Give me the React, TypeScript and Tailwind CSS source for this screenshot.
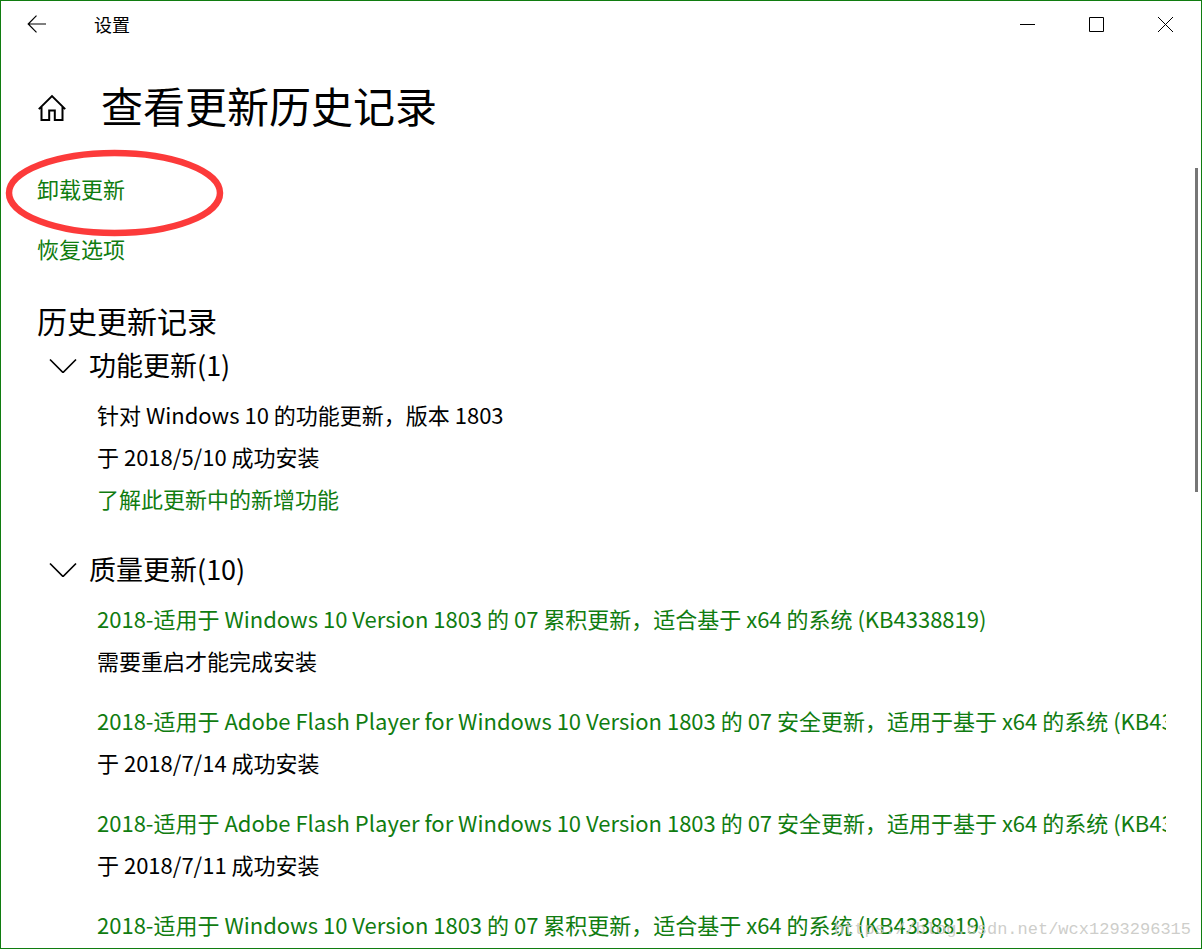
import type { ReactNode } from "react"

interface Update {
  id: number
  title: string
  status?: string
}

const featureUpdate = {
  title: "针对 Windows 10 的功能更新，版本 1803",
  status: "于 2018/5/10 成功安装",
  link: "了解此更新中的新增功能"
}

const qualityUpdates: Update[] = [
  {
    id: 1,
    title: "2018-适用于 Windows 10 Version 1803 的 07 累积更新，适合基于 x64 的系统 (KB4338819)",
    status: "需要重启才能完成安装"
  },
  {
    id: 2,
    title: "2018-适用于 Adobe Flash Player for Windows 10 Version 1803 的 07 安全更新，适用于基于 x64 的系统 (KB43",
    status: "于 2018/7/14 成功安装"
  },
  {
    id: 3,
    title: "2018-适用于 Adobe Flash Player for Windows 10 Version 1803 的 07 安全更新，适用于基于 x64 的系统 (KB43",
    status: "于 2018/7/11 成功安装"
  },
  {
    id: 4,
    title: "2018-适用于 Windows 10 Version 1803 的 07 累积更新，适合基于 x64 的系统 (KB4338819)"
  }
]

const TitleBar = () => (
  <div className="flex h-[47px] shrink-0 items-center pr-px">
    <button aria-label="返回" className="flex h-full w-[72px] items-center justify-center">
      <svg width="20" height="20" viewBox="0 0 20 20" fill="none" stroke="#000" strokeWidth="1.2">
        <path d="M19 9H1M9.5 0.7L1.2 9l8.3 8.3" />
      </svg>
    </button>
    <div className="ml-[21px] flex-1 pb-0.5 text-lg">设置</div>
    <button aria-label="最小化" className="flex h-full w-[69px] items-center justify-center">
      <svg width="15" height="15" viewBox="0 0 15 15" stroke="#000">
        <path d="M0 7.5h15" />
      </svg>
    </button>
    <button aria-label="最大化" className="flex h-full w-[69px] items-center justify-center">
      <svg width="15" height="15" viewBox="0 0 15 15" fill="none" stroke="#000">
        <path d="M0.5 0.5h14v14h-14z" />
      </svg>
    </button>
    <button aria-label="关闭" className="flex h-full w-[69px] items-center justify-center">
      <svg width="15" height="15" viewBox="0 0 15 15" stroke="#000">
        <path d="M0 0l15 15M15 0L0 15" />
      </svg>
    </button>
  </div>
)

const PageHeader = () => (
  <header className="flex h-[118px] shrink-0 items-center gap-[34px] pl-9">
    <button aria-label="主页">
      <svg width="30" height="28" viewBox="0 0 30 28" fill="none" stroke="#000" strokeWidth="2">
        <path d="M1.8 16.1L15 3.1l13.2 13M4.5 13.7v13.3h7.7v-9.4h5.6v9.400h7.7V13.700" />
      </svg>
    </button>
    <h1 className="pb-1 text-[42px] leading-[60px]">查看更新历史记录</h1>
  </header>
)

const TextLink = ({ children }: { children: ReactNode }) => (
  <a href="#" className="block whitespace-nowrap text-[#107c10]">{children}</a>
)

const Group = ({ title, children }: { title: string, children: ReactNode }) => (
  <section>
    <button aria-expanded="true" className="flex h-11 items-center gap-3 pl-3 text-[27px]">
      <svg width="28" height="16" viewBox="0 0 28 16" fill="none" stroke="#000" strokeWidth="1.7">
        <path d="M1 2.5l13 13 13-13" />
      </svg>
      {title}
    </button>
    <div className="mt-1.5 flex flex-col gap-[18px] overflow-hidden pl-[60px]">{children}</div>
  </section>
)

export default () => (
  <div className="relative flex h-screen flex-col overflow-hidden border border-[#107c10] bg-white font-['Noto_Sans_CJK_SC',sans-serif] text-black">
    <TitleBar />
    <PageHeader />
    <main className="relative min-h-0 flex-1 overflow-hidden pr-[35px] pl-9 text-[22px] leading-[42px]">
      <nav className="flex flex-col items-start gap-[18px] pt-px">
        <TextLink>卸载更新</TextLink>
        <TextLink>恢复选项</TextLink>
      </nav>
      <h2 className="mt-7 text-3xl leading-[46px]">历史更新记录</h2>
      <div className="flex flex-col gap-7">
        <Group title="功能更新(1)">
          <div>
            <div>{featureUpdate.title}</div>
            <div>{featureUpdate.status}</div>
            <TextLink>{featureUpdate.link}</TextLink>
          </div>
        </Group>
        <Group title="质量更新(10)">
          {qualityUpdates.map(update => (
            <div key={update.id}>
              <TextLink>{update.title}</TextLink>
              {update.status && <div>{update.status}</div>}
            </div>
          ))}
        </Group>
      </div>
      <div className="absolute top-0.5 right-[3px] h-[324px] w-[3px] bg-[#767676]" />
    </main>
    <svg className="pointer-events-none absolute top-[148px] left-1" width="220" height="90" viewBox="0 0 220 90" fill="none">
      <ellipse cx="109.5" cy="44" rx="105.5" ry="40" stroke="#fc3a3a" strokeWidth="6.5" />
    </svg>
    <div className="pointer-events-none absolute right-2.5 bottom-1.5 font-['Liberation_Mono',monospace] text-[17px] leading-6 text-[#c8c8c4]/90">
      https://blog.csdn.net/wcx1293296315
    </div>
  </div>
)
